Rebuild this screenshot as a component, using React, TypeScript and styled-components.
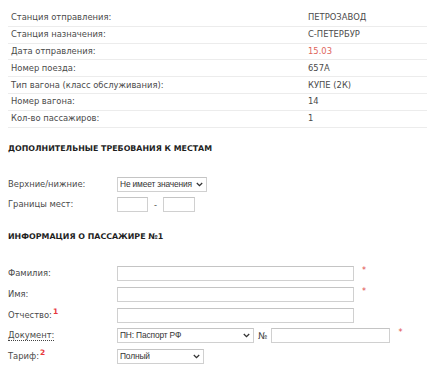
import React from "react";
import styled, { createGlobalStyle } from "styled-components";

const GlobalStyle = createGlobalStyle`
  html, body {
    margin: 0;
    padding: 0;
    background: #fff;
  }
  body {
    font-family: "DejaVu Sans", Verdana, sans-serif;
    font-size: 8.4px;
    color: #4a4a4a;
  }
`;

const Page = styled.div`
  width: 419px;
  padding: 10px 7px 0 8px;
`;

const InfoTable = styled.table`
  width: 100%;
  border-collapse: collapse;
`;

const Row = styled.tr`
  border-bottom: 1px solid #ececec;
`;

const Cell = styled.td<{ $accent?: boolean }>`
  height: 15.8px;
  padding: 0 3px;
  line-height: 15px;
  white-space: nowrap;
  color: ${({ $accent }) => ($accent ? "#e0665c" : "#4a4a4a")};
  &:first-child {
    width: 291px;
  }
`;

const SectionTitle = styled.h3<{ $top: number; $bottom: number }>`
  margin: ${({ $top }) => $top}px 0 ${({ $bottom }) => $bottom}px;
  font-size: 7.9px;
  font-weight: bold;
  line-height: 12px;
  color: #1e1e1e;
`;

const Form = styled.div`
  display: flex;
  flex-direction: column;
  gap: 5.7px;
`;

const FormRow = styled.div`
  display: flex;
  align-items: center;
  height: 15px;
`;

const Label = styled.span<{ $dotted?: boolean }>`
  width: 109px;
  flex: none;
  line-height: 15px;
  span {
    border-bottom: ${({ $dotted }) => ($dotted ? "1px dotted #444" : "none")};
  }
  sup {
    color: #e8383d;
    font-size: 7.5px;
    font-weight: bold;
    margin-left: 1px;
    vertical-align: 4px;
    line-height: 0;
  }
`;

const TextInput = styled.input<{ $w: number }>`
  box-sizing: border-box;
  width: ${({ $w }) => $w}px;
  height: 15px;
  margin: 0;
  padding: 0 3px;
  border: 1px solid #d0d0d0;
  border-top-color: #c4c4c4;
  background: #fff;
  outline: none;
`;

const SelectWrap = styled.div<{ $w: number }>`
  position: relative;
  box-sizing: border-box;
  width: ${({ $w }) => $w}px;
  height: 15px;
  border: 1px solid #d0d0d0;
  border-top-color: #c4c4c4;
  background: #fff;
  svg {
    position: absolute;
    right: 3px;
    top: 4px;
    pointer-events: none;
  }
`;

const Select = styled.select`
  appearance: none;
  width: 100%;
  height: 13px;
  border: none;
  margin: 0;
  padding: 0 0 0 2px;
  background: transparent;
  font-family: "Liberation Sans", Arial, sans-serif;
  font-size: 8.4px;
  letter-spacing: -0.15px;
  line-height: 13px;
  color: #333;
  outline: none;
`;

const Dash = styled.span`
  width: 15px;
  text-align: center;
`;

const NumSign = styled.span`
  margin: 0 4px;
  font-size: 9px;
  color: #444;
`;

const Star = styled.span`
  margin-left: 8px;
  align-self: flex-start;
  color: #e04a4a;
  font-size: 8px;
`;

function Chevron() {
  return (
    <svg width="7" height="5" viewBox="0 0 7 5">
      <path d="M0.8 1 L3.5 3.7 L6.2 1" fill="none" stroke="#333" strokeWidth="1.3" />
    </svg>
  );
}

function DropDown({ w, value }: { w: number; value: string }) {
  return (
    <SelectWrap $w={w}>
      <Select defaultValue={value}>
        <option>{value}</option>
      </Select>
      <Chevron />
    </SelectWrap>
  );
}

const trip: [string, string][] = [
  ["Станция отправления:", "ПЕТРОЗАВОД"],
  ["Станция назначения:", "С-ПЕТЕРБУР"],
  ["Дата отправления:", "15.03"],
  ["Номер поезда:", "657А"],
  ["Тип вагона (класс обслуживания):", "КУПЕ (2К)"],
  ["Номер вагона:", "14"],
  ["Кол-во пассажиров:", "1"],
];

export default function App() {
  return (
    <Page>
      <GlobalStyle />
      <InfoTable>
        <tbody>
          {trip.map(([k, v]) => (
            <Row key={k}>
              <Cell>{k}</Cell>
              <Cell $accent={k === "Дата отправления:"}>{v}</Cell>
            </Row>
          ))}
        </tbody>
      </InfoTable>

      <SectionTitle $top={15} $bottom={22}>ДОПОЛНИТЕЛЬНЫЕ ТРЕБОВАНИЯ К МЕСТАМ</SectionTitle>
      <Form>
        <FormRow>
          <Label>Верхние/нижние:</Label>
          <DropDown w={90} value="Не имеет значения" />
        </FormRow>
        <FormRow>
          <Label>Границы мест:</Label>
          <TextInput $w={31} />
          <Dash>-</Dash>
          <TextInput $w={32} />
        </FormRow>
      </Form>

      <SectionTitle $top={19} $bottom={23}>ИНФОРМАЦИЯ О ПАССАЖИРЕ №1</SectionTitle>
      <Form>
        <FormRow>
          <Label>Фамилия:</Label>
          <TextInput $w={237} />
          <Star>*</Star>
        </FormRow>
        <FormRow>
          <Label>Имя:</Label>
          <TextInput $w={237} />
          <Star>*</Star>
        </FormRow>
        <FormRow>
          <Label>
            Отчество:<sup>1</sup>
          </Label>
          <TextInput $w={237} />
        </FormRow>
        <FormRow>
          <Label $dotted>
            <span>Документ:</span>
          </Label>
          <DropDown w={137} value="ПН: Паспорт РФ" />
          <NumSign>№</NumSign>
          <TextInput $w={119} />
          <Star>*</Star>
        </FormRow>
        <FormRow>
          <Label>
            Тариф:<sup>2</sup>
          </Label>
          <DropDown w={87} value="Полный" />
        </FormRow>
      </Form>
    </Page>
  );
}
